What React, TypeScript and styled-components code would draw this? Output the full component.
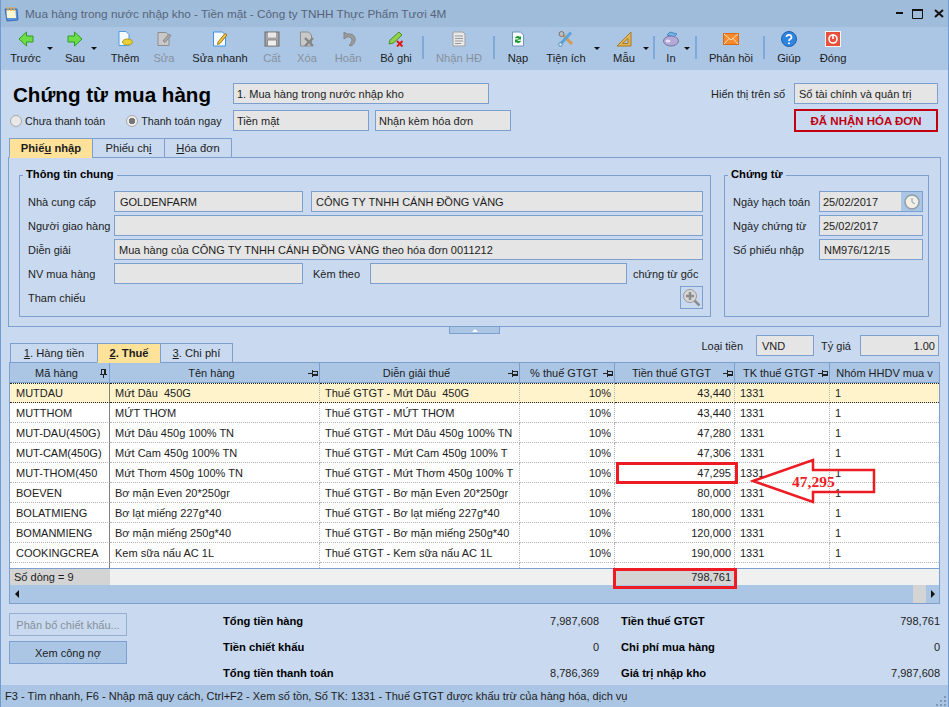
import React from "react";
import styled, { createGlobalStyle } from "styled-components";

const GlobalStyle = createGlobalStyle`
  * { box-sizing: border-box; }
  html, body { margin: 0; padding: 0; background: #c9daf0; }
  body { font-family: "Liberation Sans", Arial, sans-serif; font-size: 11px; color: #1c1c1c; }
`;

const LINE = "#7d9fcf";
const BAR = "#abc6e5";
const PANEL = "#c9daf0";

const COLUMNS = "100px 210px 200px 95px 120px 95px 109px";

const Pin = ({ vertical }: { vertical?: boolean }) => (
  <svg width="10" height="10" viewBox="0 0 10 10" style={vertical ? undefined : { transform: "rotate(90deg)" }}>
    <path d="M3 1h4v5H3zM1.5 6h7M5 6v4M6 1v5" fill="none" stroke="#222" strokeWidth="1" shapeRendering="crispEdges" />
  </svg>
);

const gray = { fill: "#c9c9c9", stroke: "#8d8d8d" };

const icons: Record<string, React.ReactNode> = {
  back: <path d="M8.500 1 1 8l7.500 7v-4H15V5H8.500z" fill="#6fdc4a" stroke="#2f9e22" strokeLinejoin="round" />,
  next: <path d="M7.500 1 15 8l-7.500 7v-4H1V5h6.500z" fill="#6fdc4a" stroke="#2f9e22" strokeLinejoin="round" />,
  add: (
    <>
      <path d="M2 .5h7l3 3v11H2z" fill="#f6fbff" stroke="#4d9be0" />
      <ellipse cx="10.500" cy="11" rx="5" ry="3" fill="#e8cf3a" stroke="#b49a18" />
    </>
  ),
  edit: (
    <>
      <path d="M2 1.500h8l3 3v10H2z" {...gray} />
      <path d="M7 10 13 3l2 1.500-6 7z" fill="#a8a8a8" stroke="#8d8d8d" />
    </>
  ),
  quick: (
    <>
      <path d="M1.500 1h9l3 3v11h-12z" fill="#f6fbff" stroke="#3d93e0" />
      <path d="M6 11 13 2.500l2 1.500-7 8.500-2.500 1z" fill="#f5c542" stroke="#a5761a" />
    </>
  ),
  save: (
    <>
      <rect x="1" y="1" width="14" height="14" fill="#a5a5a5" stroke="#6d6d6d" />
      <rect x="4" y="1.500" width="8" height="5" fill="#e8e8e8" />
      <rect x="3.500" y="9" width="9" height="6" fill="#efefef" stroke="#8d8d8d" />
    </>
  ),
  del: (
    <>
      <path d="M1.500 1h8l3 3v11h-11z" {...gray} />
      <path d="m6 7 8 8m0-8-8 8" stroke="#858585" strokeWidth="2.400" />
    </>
  ),
  undo: <path d="M4 1v7l3-2c5-1 7 4 2 8l2 1c6-3 6-13-3-12L7 3z" fill="#9b9b9b" stroke="#858585" strokeLinejoin="round" />,
  cancel: (
    <>
      <path d="M1 13 2 9 11 1l3 3-8.500 8z" fill="#8fd24e" stroke="#4f8e24" />
      <path d="m9 10 5.500 5.500m0-5.500L9 15.500" stroke="#e01414" strokeWidth="1.900" />
    </>
  ),
  invoice: (
    <>
      <path d="M2 1h10l2 2v12H2z" fill="#e8e8e8" stroke="#a0a0a0" />
      <path d="M4 5h8M4 7.500h8M4 10h8M4 12.500h6" stroke="#9a9a9a" />
    </>
  ),
  load: (
    <>
      <path d="M2.500 1h8l3 3v11h-11z" fill="#f5fbff" stroke="#6f94b8" />
      <path d="M5 7a3 3 0 0 1 5-1l1-1v3.500H7.500l1-1a2 2 0 0 0-2.500 0zM11 10a3 3 0 0 1-5 1l-1 1V8.500h3.500l-1 1a2 2 0 0 0 2.500 0z" fill="#1d9a2d" />
    </>
  ),
  tools: (
    <>
      <path d="m3 2 11 11" stroke="#d39a52" strokeWidth="3" />
      <path d="M13 1.500 3 12.500" stroke="#5aa4dc" strokeWidth="3" />
      <circle cx="3.500" cy="3" r="2.500" fill="#bdbdbd" stroke="#777" />
      <circle cx="2.500" cy="13.500" r="1.800" fill="#d8e8f5" stroke="#5a8ab5" />
    </>
  ),
  ruler: (
    <>
      <path d="M15 1v14H1z" fill="#e2b455" stroke="#a87a24" />
      <path d="M12 7.500V12.500H6.500z" fill="#abc6e5" stroke="#a87a24" />
    </>
  ),
  print: (
    <>
      <path d="M4 4 7 1l7 2-3 3z" fill="#6fb4ea" stroke="#4b86bd" />
      <ellipse cx="8" cy="10" rx="7.500" ry="5" fill="#b3a9d6" stroke="#7b74a4" />
      <ellipse cx="5" cy="10" rx="2.500" ry="1.500" fill="#e5e0f5" />
    </>
  ),
  mail: (
    <>
      <rect x=".5" y="2.500" width="15" height="11" fill="#f58a2c" stroke="#d96a12" />
      <path d="m1 3 7 6 7-6M1 13l5-5.500M15 13l-5-5.500" fill="none" stroke="#ffe2c2" />
    </>
  ),
  help: (
    <>
      <circle cx="8" cy="8" r="7.500" fill="#2f84dd" stroke="#1d5fae" />
      <path d="M5.500 6a2.500 2.300 0 1 1 3.500 2.200c-.8.4-1 .8-1 1.800" fill="none" stroke="#fff" strokeWidth="1.700" />
      <circle cx="8" cy="12.200" r="1" fill="#fff" />
    </>
  ),
  close: (
    <>
      <rect x=".5" y=".5" width="15" height="15" fill="#e8503a" stroke="#f4f4f4" />
      <circle cx="8" cy="8" r="4" fill="none" stroke="#fff" strokeWidth="1.600" />
      <path d="M8 3v5" stroke="#fff" strokeWidth="1.600" />
    </>
  ),
};

const Window = styled.div`
  width: 949px;
  height: 707px;
  display: flex;
  flex-direction: column;
  overflow: hidden;
  background: ${PANEL};
  border-left: 1px solid #6f9ad2;
  border-right: 1px solid #6f9ad2;
`;

const TitleBar = styled.div`
  height: 27px;
  flex: none;
  display: flex;
  align-items: center;
  gap: 6px;
  padding: 0 3px;
  background: #a0bcdb;
  color: #566579;
  font-size: 11.8px;
`;

const TitleText = styled.span`
  flex: 1;
`;

const Toolbar = styled.div`
  height: 43px;
  flex: none;
  display: flex;
  background: ${BAR};
  font-size: 11.2px;
`;

const ToolItem = styled.div<{ $w: number; $ml?: number; $off?: boolean }>`
  position: relative;
  width: ${(p) => p.$w}px;
  margin-left: ${(p) => p.$ml ?? 0}px;
  flex: none;
  display: flex;
  flex-direction: column;
  align-items: center;
  padding-top: 4px;
  gap: 5px;
  white-space: nowrap;
  color: ${(p) => (p.$off ? "#87919c" : "#1c1c1c")};
`;

const ToolIcon = styled.svg`
  width: 16px;
  height: 16px;
  flex: none;
`;

const Caret = styled.span<{ $right: number }>`
  position: absolute;
  top: 20px;
  right: ${(p) => p.$right}px;
  border-left: 3px solid transparent;
  border-right: 3px solid transparent;
  border-top: 3px solid #111;
`;

const ToolSep = styled.div<{ $ml: number }>`
  width: 2px;
  height: 23px;
  margin: 9px 0 0 ${(p) => p.$ml}px;
  flex: none;
  background: #7fa9d8;
`;

const Body = styled.div`
  flex: 1;
  min-height: 0;
  overflow: hidden;
  display: flex;
  flex-direction: column;
`;

const HeaderGrid = styled.div`
  display: grid;
  grid-template-columns: 223px 1fr 228px;
  grid-template-rows: 21px 21px;
  row-gap: 6px;
  margin: 13px 10px 0 9px;
`;

const PageTitle = styled.h1`
  margin: 0;
  padding-left: 3px;
  font-size: 20.6px;
  line-height: 24px;
  font-weight: bold;
  color: #000;
  white-space: nowrap;
`;

const RadioRow = styled.div`
  display: flex;
  align-items: center;
  font-size: 10.7px;
  white-space: nowrap;
`;

const Radio = styled.span<{ $checked?: boolean; $ml?: number }>`
  width: 12px;
  height: 12px;
  margin: 0 3px 0 ${(p) => p.$ml ?? 0}px;
  flex: none;
  border-radius: 50%;
  border: 1px solid #a8a8a8;
  background: ${(p) => (p.$checked ? "radial-gradient(circle, #777 0 3px, #eee 3.5px)" : "#e8e8e8")};
`;

const Field = styled.div<{ $w?: number; $right?: boolean; $grow?: boolean; $pad?: number }>`
  height: 21px;
  flex: ${(p) => (p.$grow ? "1" : "none")};
  width: ${(p) => (p.$w ? `${p.$w}px` : "auto")};
  display: flex;
  align-items: center;
  justify-content: ${(p) => (p.$right ? "flex-end" : "flex-start")};
  padding: 0 ${(p) => (p.$pad ?? 4) - 1}px;
  background: #e5e5e5;
  border: 1px solid ${LINE};
  white-space: nowrap;
  overflow: hidden;
`;

const Row = styled.div<{ $gap?: number }>`
  display: flex;
  align-items: center;
  gap: ${(p) => p.$gap ?? 0}px;
`;

const RightRow = styled(Row)`
  justify-content: flex-end;
`;

const Stamp = styled.div`
  width: 144px;
  height: 23px;
  margin: -1px 0 0 auto;
  display: flex;
  align-items: center;
  justify-content: center;
  border: 2px solid #c00010;
  color: #c00010;
  font-size: 11.5px;
  font-weight: bold;
`;

const TabStrip = styled.div`
  display: flex;
  height: 20px;
  flex: none;
  font-size: 11.2px;
`;

const TopTabs = styled(TabStrip)`
  margin: 7px 0 -1px 8px;
  position: relative;
`;

const Tab = styled.div<{ $w: number; $active?: boolean }>`
  width: ${(p) => p.$w}px;
  display: flex;
  align-items: center;
  justify-content: center;
  margin-left: -1px;
  border: 1px solid ${LINE};
  background: ${(p) => (p.$active ? "#ffe29a" : PANEL)};
  font-weight: ${(p) => (p.$active ? "bold" : "normal")};
  border-bottom-color: ${(p) => (p.$active ? "#ffe29a" : LINE)};
  position: relative;
  &:first-child { margin-left: 0; }
`;

const Panel = styled.div`
  height: 170px;
  flex: none;
  display: flex;
  gap: 13px;
  margin: 0 7px;
  padding: 17px 11px 0 10px;
  border: 1px solid ${LINE};
`;

const Group = styled.div<{ $w: number }>`
  position: relative;
  width: ${(p) => p.$w}px;
  height: 142px;
  flex: none;
  display: flex;
  flex-direction: column;
  gap: 3px;
  padding: 15px 7px 0 8px;
  border: 1px solid ${LINE};
`;

const Legend = styled.span`
  position: absolute;
  top: -8px;
  left: 3px;
  padding: 0 3px;
  background: ${PANEL};
  font-size: 11.2px;
  font-weight: bold;
  color: #000;
`;

const Label = styled.span<{ $w?: number; $ml?: number }>`
  width: ${(p) => (p.$w ? `${p.$w}px` : "auto")};
  margin-left: ${(p) => p.$ml ?? 0}px;
  flex: none;
  white-space: nowrap;
`;

const FormRow = styled.div`
  height: 21px;
  display: flex;
  align-items: center;
`;

const SecondField = styled(Field)`
  margin-left: 8px;
`;

const RefRow = styled.div`
  height: 23px;
  margin-top: -1px;
  display: flex;
  align-items: center;
  justify-content: space-between;
`;

const IconButton = styled.div`
  width: 23px;
  height: 23px;
  display: flex;
  align-items: center;
  justify-content: center;
  background: ${PANEL};
  border: 1px solid ${LINE};
`;

const DateField = styled(Field)`
  padding-right: 0;
  justify-content: space-between;
`;

const DateButton = styled.div`
  width: 21px;
  height: 19px;
  display: flex;
  align-items: center;
  justify-content: center;
  background: ${BAR};
`;

const Splitter = styled.div`
  width: 51px;
  height: 7px;
  flex: none;
  margin: 0 auto;
  display: flex;
  align-items: center;
  justify-content: center;
  background: ${BAR};
  border: 1px solid ${LINE};
  border-top: none;
`;

const UpMark = styled.span`
  border-left: 3px solid transparent;
  border-right: 3px solid transparent;
  border-bottom: 3px solid #fff;
`;

const LowerHead = styled.div`
  height: 28px;
  flex: none;
  display: flex;
  justify-content: space-between;
  margin: 0 9px 0 9px;
  position: relative;
  z-index: 1;
`;

const LowerTabs = styled(TabStrip)`
  align-self: flex-end;
  margin-bottom: -1px;
`;

const CurrencyBox = styled(Row)`
  align-self: flex-start;
  margin-top: 1px;
`;

const CurrencyField = styled(Field)<{ $ml: number }>`
  margin-left: ${(p) => p.$ml}px;
`;

const GridWrap = styled.div`
  position: relative;
  height: 242px;
  flex: none;
  margin: 0 8px;
  display: flex;
  flex-direction: column;
  border: 1px solid ${LINE};
  background: #fff;
`;

const GridRow = styled.div`
  display: grid;
  grid-template-columns: ${COLUMNS};
`;

const HeadCell = styled.div<{ $last?: boolean }>`
  position: relative;
  height: 20px;
  display: flex;
  align-items: center;
  justify-content: center;
  padding-right: ${(p) => (p.$last ? 0 : 6)}px;
  background: ${BAR};
  border-right: 1px solid ${LINE};
  border-bottom: 1px solid ${LINE};
  white-space: nowrap;
  overflow: hidden;
  &:last-child { border-right: none; }
`;

const PinSlot = styled.span`
  position: absolute;
  right: 1px;
  top: 5px;
  display: flex;
`;

const Cell = styled.div<{ $right?: boolean; $first?: boolean; $active?: boolean }>`
  height: 20px;
  display: flex;
  align-items: center;
  justify-content: ${(p) => (p.$right ? "flex-end" : "flex-start")};
  padding: 0 ${(p) => (p.$right ? 3 : 1)}px 0 ${(p) => (p.$first ? 6 : 5)}px;
  white-space: pre;
  overflow: hidden;
  background: ${(p) => (p.$active ? "#fff3cc" : "#fff")};
  border-right: 1px ${(p) => (p.$first ? "solid #808080" : "dotted #b5b5b5")};
  border-bottom: 1px dotted ${(p) => (p.$active ? "#222" : "#b5b5b5")};
  border-top: ${(p) => (p.$active ? "1px dotted #222" : "none")};
  &:last-child { border-right: none; }
`;

const Filler = styled(GridRow)`
  height: 5px;
`;

const FillerCell = styled.div<{ $first?: boolean }>`
  border-right: 1px ${(p) => (p.$first ? "solid #808080" : "dotted #b5b5b5")};
  &:last-child { border-right: none; }
`;

const SummaryRow = styled(GridRow)`
  height: 17px;
  background: #f0f0f0;
  border-top: 1px solid ${LINE};
`;

const SummaryCell = styled.div<{ $dark?: boolean; $right?: boolean }>`
  display: flex;
  align-items: center;
  justify-content: ${(p) => (p.$right ? "flex-end" : "flex-start")};
  padding: 0 4px;
  background: ${(p) => (p.$dark ? "#d4d4d4" : "transparent")};
`;

const ScrollBar = styled.div`
  height: 18px;
  flex: none;
  display: flex;
  align-items: center;
  justify-content: space-between;
  padding: 0 4px 0 5px;
  background: ${BAR};
`;

const ScrollThumb = styled.span`
  width: 13px;
  height: 18px;
  margin: 0 5px 0 auto;
  background: #d4d4d4;
`;

const ScrollArrow = styled.span<{ $dir: "left" | "right" }>`
  border-top: 4px solid transparent;
  border-bottom: 4px solid transparent;
  ${(p) => (p.$dir === "left" ? "border-right: 4px solid #111;" : "border-left: 4px solid #111;")}
`;

const Highlight = styled.div<{ $l: number; $t: number; $w: number; $h: number }>`
  position: absolute;
  left: ${(p) => p.$l}px;
  top: ${(p) => p.$t}px;
  width: ${(p) => p.$w}px;
  height: ${(p) => p.$h}px;
  border: 3px solid #ed1c24;
`;

const Callout = styled.div`
  position: absolute;
  left: 740px;
  top: 94px;
  width: 128px;
  height: 48px;
`;

const CalloutText = styled.span`
  position: absolute;
  left: 42px;
  top: 16px;
  font-family: "Liberation Serif", "Times New Roman", serif;
  font-size: 15.5px;
  font-weight: bold;
  color: #ed1c24;
`;

const Bottom = styled.div`
  display: flex;
  margin: 4px 0 0 8px;
`;

const ButtonColumn = styled.div`
  width: 118px;
  flex: none;
  display: flex;
  flex-direction: column;
  gap: 5px;
  padding-top: 5px;
`;

const ActionButton = styled.div<{ $off?: boolean }>`
  height: 23px;
  display: flex;
  align-items: center;
  justify-content: center;
  border: 1px solid ${(p) => (p.$off ? "#94add0" : LINE)};
  background: ${(p) => (p.$off ? PANEL : BAR)};
  color: ${(p) => (p.$off ? "#85909c" : "#1c1c1c")};
`;

const Totals = styled.div`
  margin-left: 96px;
  width: 717px;
  display: grid;
  grid-template-columns: 300px 76px 22px 243px 76px;
  grid-auto-rows: 26px;
  align-items: center;
`;

const TotalLabel = styled.span`
  font-size: 11.2px;
  font-weight: bold;
  color: #000;
  white-space: nowrap;
`;

const TotalValue = styled.span`
  text-align: right;
`;

const StatusBar = styled.div`
  position: relative;
  height: 22px;
  flex: none;
  display: flex;
  align-items: center;
  padding-left: 4px;
  background: ${BAR};
`;

const Grip = styled.svg`
  position: absolute;
  right: 1px;
  bottom: 1px;
`;

const rows = [
  ["MUTDAU", "Mứt Dâu  450G", "Thuế GTGT - Mứt Dâu  450G", "43,440"],
  ["MUTTHOM", "MỨT THƠM", "Thuế GTGT - MỨT THƠM", "43,440"],
  ["MUT-DAU(450G)", "Mứt Dâu 450g 100% TN", "Thuế GTGT - Mứt Dâu 450g 100% TN", "47,280"],
  ["MUT-CAM(450G)", "Mứt Cam 450g 100% TN", "Thuế GTGT - Mứt Cam 450g 100% T", "47,306"],
  ["MUT-THOM(450", "Mứt Thơm 450g 100% TN", "Thuế GTGT - Mứt Thơm 450g 100% T", "47,295"],
  ["BOEVEN", "Bơ mặn Even 20*250gr", "Thuế GTGT - Bơ mặn Even 20*250gr", "80,000"],
  ["BOLATMIENG", "Bơ lạt miếng 227g*40", "Thuế GTGT - Bơ lạt miếng 227g*40", "180,000"],
  ["BOMANMIENG", "Bơ mặn miếng 250g*40", "Thuế GTGT - Bơ mặn miếng 250g*40", "120,000"],
  ["COOKINGCREA", "Kem sữa nấu AC 1L", "Thuế GTGT - Kem sữa nấu AC 1L", "190,000"],
];

const headers = ["Mã hàng", "Tên hàng", "Diễn giải thuế", "% thuế GTGT", "Tiền thuế GTGT", "TK thuế GTGT", "Nhóm HHDV mua v"];

const Tool = ({ icon, label, w, ml, off, caret }: { icon: string; label: string; w: number; ml?: number; off?: boolean; caret?: number }) => (
  <ToolItem $w={w} $ml={ml} $off={off}>
    <ToolIcon viewBox="0 0 16 16">{icons[icon]}</ToolIcon>
    {label}
    {caret !== undefined && <Caret $right={caret} />}
  </ToolItem>
);

export default function App() {
  return (
    <>
      <GlobalStyle />
      <Window>
        <TitleBar>
          <svg width="15" height="16" viewBox="0 0 15 16">
            <path d="M1 3h12l1 11-11 1z" fill="#5a93e0" stroke="#3c6db5" />
            <path d="M2.500 4h9l.5 8H3z" fill="#fdf6d0" />
            <path d="M4 1v4M7 1v4M10 1v4" stroke="#e8a83a" strokeWidth="1.500" />
          </svg>
          <TitleText>Mua hàng trong nước nhập kho - Tiền mặt - Công ty TNHH Thực Phẩm Tươi 4M</TitleText>
          <svg width="49" height="12" viewBox="0 0 49 12">
            <path d="M0 5h7" stroke="#111" strokeWidth="2" />
            <path d="M16.500 1.500h10v9h-10z" fill="none" stroke="#111" />
            <path d="M16 2h11" stroke="#111" strokeWidth="2" />
            <path d="m39 2 8 7m0-7-8 7" stroke="#111" strokeWidth="2" />
          </svg>
        </TitleBar>

        <Toolbar>
          <Tool icon="back" label="Trước" w={49} caret={-3} />
          <Tool icon="next" label="Sau" w={50} caret={3} />
          <Tool icon="add" label="Thêm" w={50} />
          <Tool icon="edit" label="Sửa" w={28} off />
          <Tool icon="quick" label="Sửa nhanh" w={84} />
          <Tool icon="save" label="Cất" w={20} off />
          <Tool icon="del" label="Xóa" w={50} off />
          <Tool icon="undo" label="Hoãn" w={32} off />
          <Tool icon="cancel" label="Bỏ ghi" w={52} ml={6} />
          <ToolSep $ml={0} />
          <Tool icon="invoice" label="Nhận HĐ" w={60} ml={5} off />
          <ToolSep $ml={4} />
          <Tool icon="load" label="Nạp" w={46} />
          <Tool icon="tools" label="Tiện ích" w={50} caret={-9} />
          <Tool icon="ruler" label="Mẫu" w={44} ml={11} caret={-3} />
          <ToolSep $ml={7} />
          <Tool icon="print" label="In" w={30} ml={1} caret={-4} />
          <ToolSep $ml={9} />
          <Tool icon="mail" label="Phản hồi" w={56} ml={6} />
          <ToolSep $ml={4} />
          <Tool icon="help" label="Giúp" w={44} ml={2} />
          <Tool icon="close" label="Đóng" w={44} />
        </Toolbar>

        <Body>
          <HeaderGrid>
            <PageTitle>Chứng từ mua hàng</PageTitle>
            <Field $w={256}>1. Mua hàng trong nước nhập kho</Field>
            <RightRow $gap={9}>
              <Label>Hiển thị trên số</Label>
              <Field $w={144} $pad={5}>Sổ tài chính và quản trị</Field>
            </RightRow>
            <RadioRow>
              <Radio />
              Chưa thanh toán
              <Radio $ml={21} $checked />
              Thanh toán ngay
            </RadioRow>
            <Row $gap={6}>
              <Field $w={136}>Tiền mặt</Field>
              <Field $w={136}>Nhận kèm hóa đơn</Field>
            </Row>
            <Stamp>ĐÃ NHẬN HÓA ĐƠN</Stamp>
          </HeaderGrid>

          <TopTabs>
            <Tab $w={84} $active>
              <span>Phiế<u>u</u> nhập</span>
            </Tab>
            <Tab $w={73}>
              <span>Phiếu ch<u>i</u></span>
            </Tab>
            <Tab $w={68}>
              <span><u>H</u>óa đơn</span>
            </Tab>
          </TopTabs>

          <Panel>
            <Group $w={692}>
              <Legend>Thông tin chung</Legend>
              <FormRow>
                <Label $w={86}>Nhà cung cấp</Label>
                <Field $w={189} $pad={6}>GOLDENFARM</Field>
                <SecondField $grow $pad={5}>CÔNG TY TNHH CÁNH ĐỒNG VÀNG</SecondField>
              </FormRow>
              <FormRow>
                <Label $w={86}>Người giao hàng</Label>
                <Field $grow />
              </FormRow>
              <FormRow>
                <Label $w={86}>Diễn giải</Label>
                <Field $grow $pad={5}>Mua hàng của CÔNG TY TNHH CÁNH ĐỒNG VÀNG theo hóa đơn 0011212</Field>
              </FormRow>
              <FormRow>
                <Label $w={86}>NV mua hàng</Label>
                <Field $w={189} />
                <Label $w={57} $ml={10}>Kèm theo</Label>
                <Field $w={257} />
                <Label $ml={6}>chứng từ gốc</Label>
              </FormRow>
              <RefRow>
                <Label>Tham chiếu</Label>
                <IconButton>
                  <svg width="19" height="19" viewBox="0 0 19 19">
                    <circle cx="8" cy="8" r="6.500" fill="#d6d6d6" stroke="#9a9a9a" />
                    <path d="M8 4v8M4 8h8" stroke="#8d8d8d" strokeWidth="2.500" />
                    <path d="m12.500 12.500 5 5" stroke="#8d8d8d" strokeWidth="2.500" />
                  </svg>
                </IconButton>
              </RefRow>
            </Group>
            <Group $w={205}>
              <Legend>Chứng từ</Legend>
              <FormRow>
                <Label $w={86}>Ngày hạch toán</Label>
                <DateField $w={104}>
                  25/02/2017
                  <DateButton>
                    <svg width="16" height="16" viewBox="0 0 16 16">
                      <circle cx="8" cy="8" r="7" fill="#f3efe2" stroke="#8f9fae" strokeWidth="1.500" />
                      <path d="M8 4v4l3 2" fill="none" stroke="#7aa0c0" />
                    </svg>
                  </DateButton>
                </DateField>
              </FormRow>
              <FormRow>
                <Label $w={86}>Ngày chứng từ</Label>
                <Field $w={104}>25/02/2017</Field>
              </FormRow>
              <FormRow>
                <Label $w={86}>Số phiếu nhập</Label>
                <Field $w={104} $pad={5}>NM976/12/15</Field>
              </FormRow>
            </Group>
          </Panel>

          <Splitter>
            <UpMark />
          </Splitter>

          <LowerHead>
            <LowerTabs>
              <Tab $w={88}>
                <span><u>1</u>. Hàng tiền</span>
              </Tab>
              <Tab $w={64} $active>
                <span><u>2</u>. Thuế</span>
              </Tab>
              <Tab $w={73}>
                <span><u>3</u>. Chi phí</span>
              </Tab>
            </LowerTabs>
            <CurrencyBox>
              <Label>Loại tiền</Label>
              <CurrencyField $w={58} $ml={13} $pad={6}>VND</CurrencyField>
              <Label $ml={7}>Tỷ giá</Label>
              <CurrencyField $w={79} $ml={9} $right>1.00</CurrencyField>
            </CurrencyBox>
          </LowerHead>

          <GridWrap>
            <GridRow>
              {headers.map((h, i) => (
                <HeadCell key={h} $last={i === 6}>
                  {h}
                  {i < 6 && (
                    <PinSlot>
                      <Pin vertical={i === 0} />
                    </PinSlot>
                  )}
                </HeadCell>
              ))}
            </GridRow>
            {rows.map((r, i) => (
              <GridRow key={r[0]}>
                <Cell $first $active={i === 0}>{r[0]}</Cell>
                <Cell $active={i === 0}>{r[1]}</Cell>
                <Cell $active={i === 0}>{r[2]}</Cell>
                <Cell $right $active={i === 0}>10%</Cell>
                <Cell $right $active={i === 0}>{r[3]}</Cell>
                <Cell $active={i === 0}>1331</Cell>
                <Cell $active={i === 0}>1</Cell>
              </GridRow>
            ))}
            <Filler>
              {headers.map((h, i) => (
                <FillerCell key={h} $first={i === 0} />
              ))}
            </Filler>
            <SummaryRow>
              <SummaryCell $dark>Số dòng = 9</SummaryCell>
              <SummaryCell />
              <SummaryCell />
              <SummaryCell />
              <SummaryCell $dark $right>798,761</SummaryCell>
            </SummaryRow>
            <ScrollBar>
              <ScrollArrow $dir="left" />
              <ScrollThumb />
              <ScrollArrow $dir="right" />
            </ScrollBar>
            <Highlight $l={606} $t={99} $w={122} $h={22} />
            <Highlight $l={603} $t={205} $w={124} $h={21} />
            <Callout>
              <svg width="128" height="48" viewBox="0 0 128 48">
                <path d="M3 24 63 3v10h61v22H63v10z" fill="none" stroke="#ed1c24" strokeWidth="2.500" />
              </svg>
              <CalloutText>47,295</CalloutText>
            </Callout>
          </GridWrap>

          <Bottom>
            <ButtonColumn>
              <ActionButton $off>Phân bổ chiết khấu...</ActionButton>
              <ActionButton>Xem công nợ</ActionButton>
            </ButtonColumn>
            <Totals>
              <TotalLabel>Tổng tiền hàng</TotalLabel>
              <TotalValue>7,987,608</TotalValue>
              <span />
              <TotalLabel>Tiền thuế GTGT</TotalLabel>
              <TotalValue>798,761</TotalValue>
              <TotalLabel>Tiền chiết khấu</TotalLabel>
              <TotalValue>0</TotalValue>
              <span />
              <TotalLabel>Chi phí mua hàng</TotalLabel>
              <TotalValue>0</TotalValue>
              <TotalLabel>Tổng tiền thanh toán</TotalLabel>
              <TotalValue>8,786,369</TotalValue>
              <span />
              <TotalLabel>Giá trị nhập kho</TotalLabel>
              <TotalValue>7,987,608</TotalValue>
            </Totals>
          </Bottom>
        </Body>

        <StatusBar>
          F3 - Tìm nhanh, F6 - Nhập mã quy cách, Ctrl+F2 - Xem số tồn, Số TK: 1331 - Thuế GTGT được khấu trừ của hàng hóa, dịch vụ
          <Grip width="11" height="11" viewBox="0 0 11 11">
            <path d="M8 1h2v2H8zM4 5h2v2H4zM8 5h2v2H8zM0 9h2v2H0zM4 9h2v2H4zM8 9h2v2H8z" fill="#7f97b5" />
          </Grip>
        </StatusBar>
      </Window>
    </>
  );
}
